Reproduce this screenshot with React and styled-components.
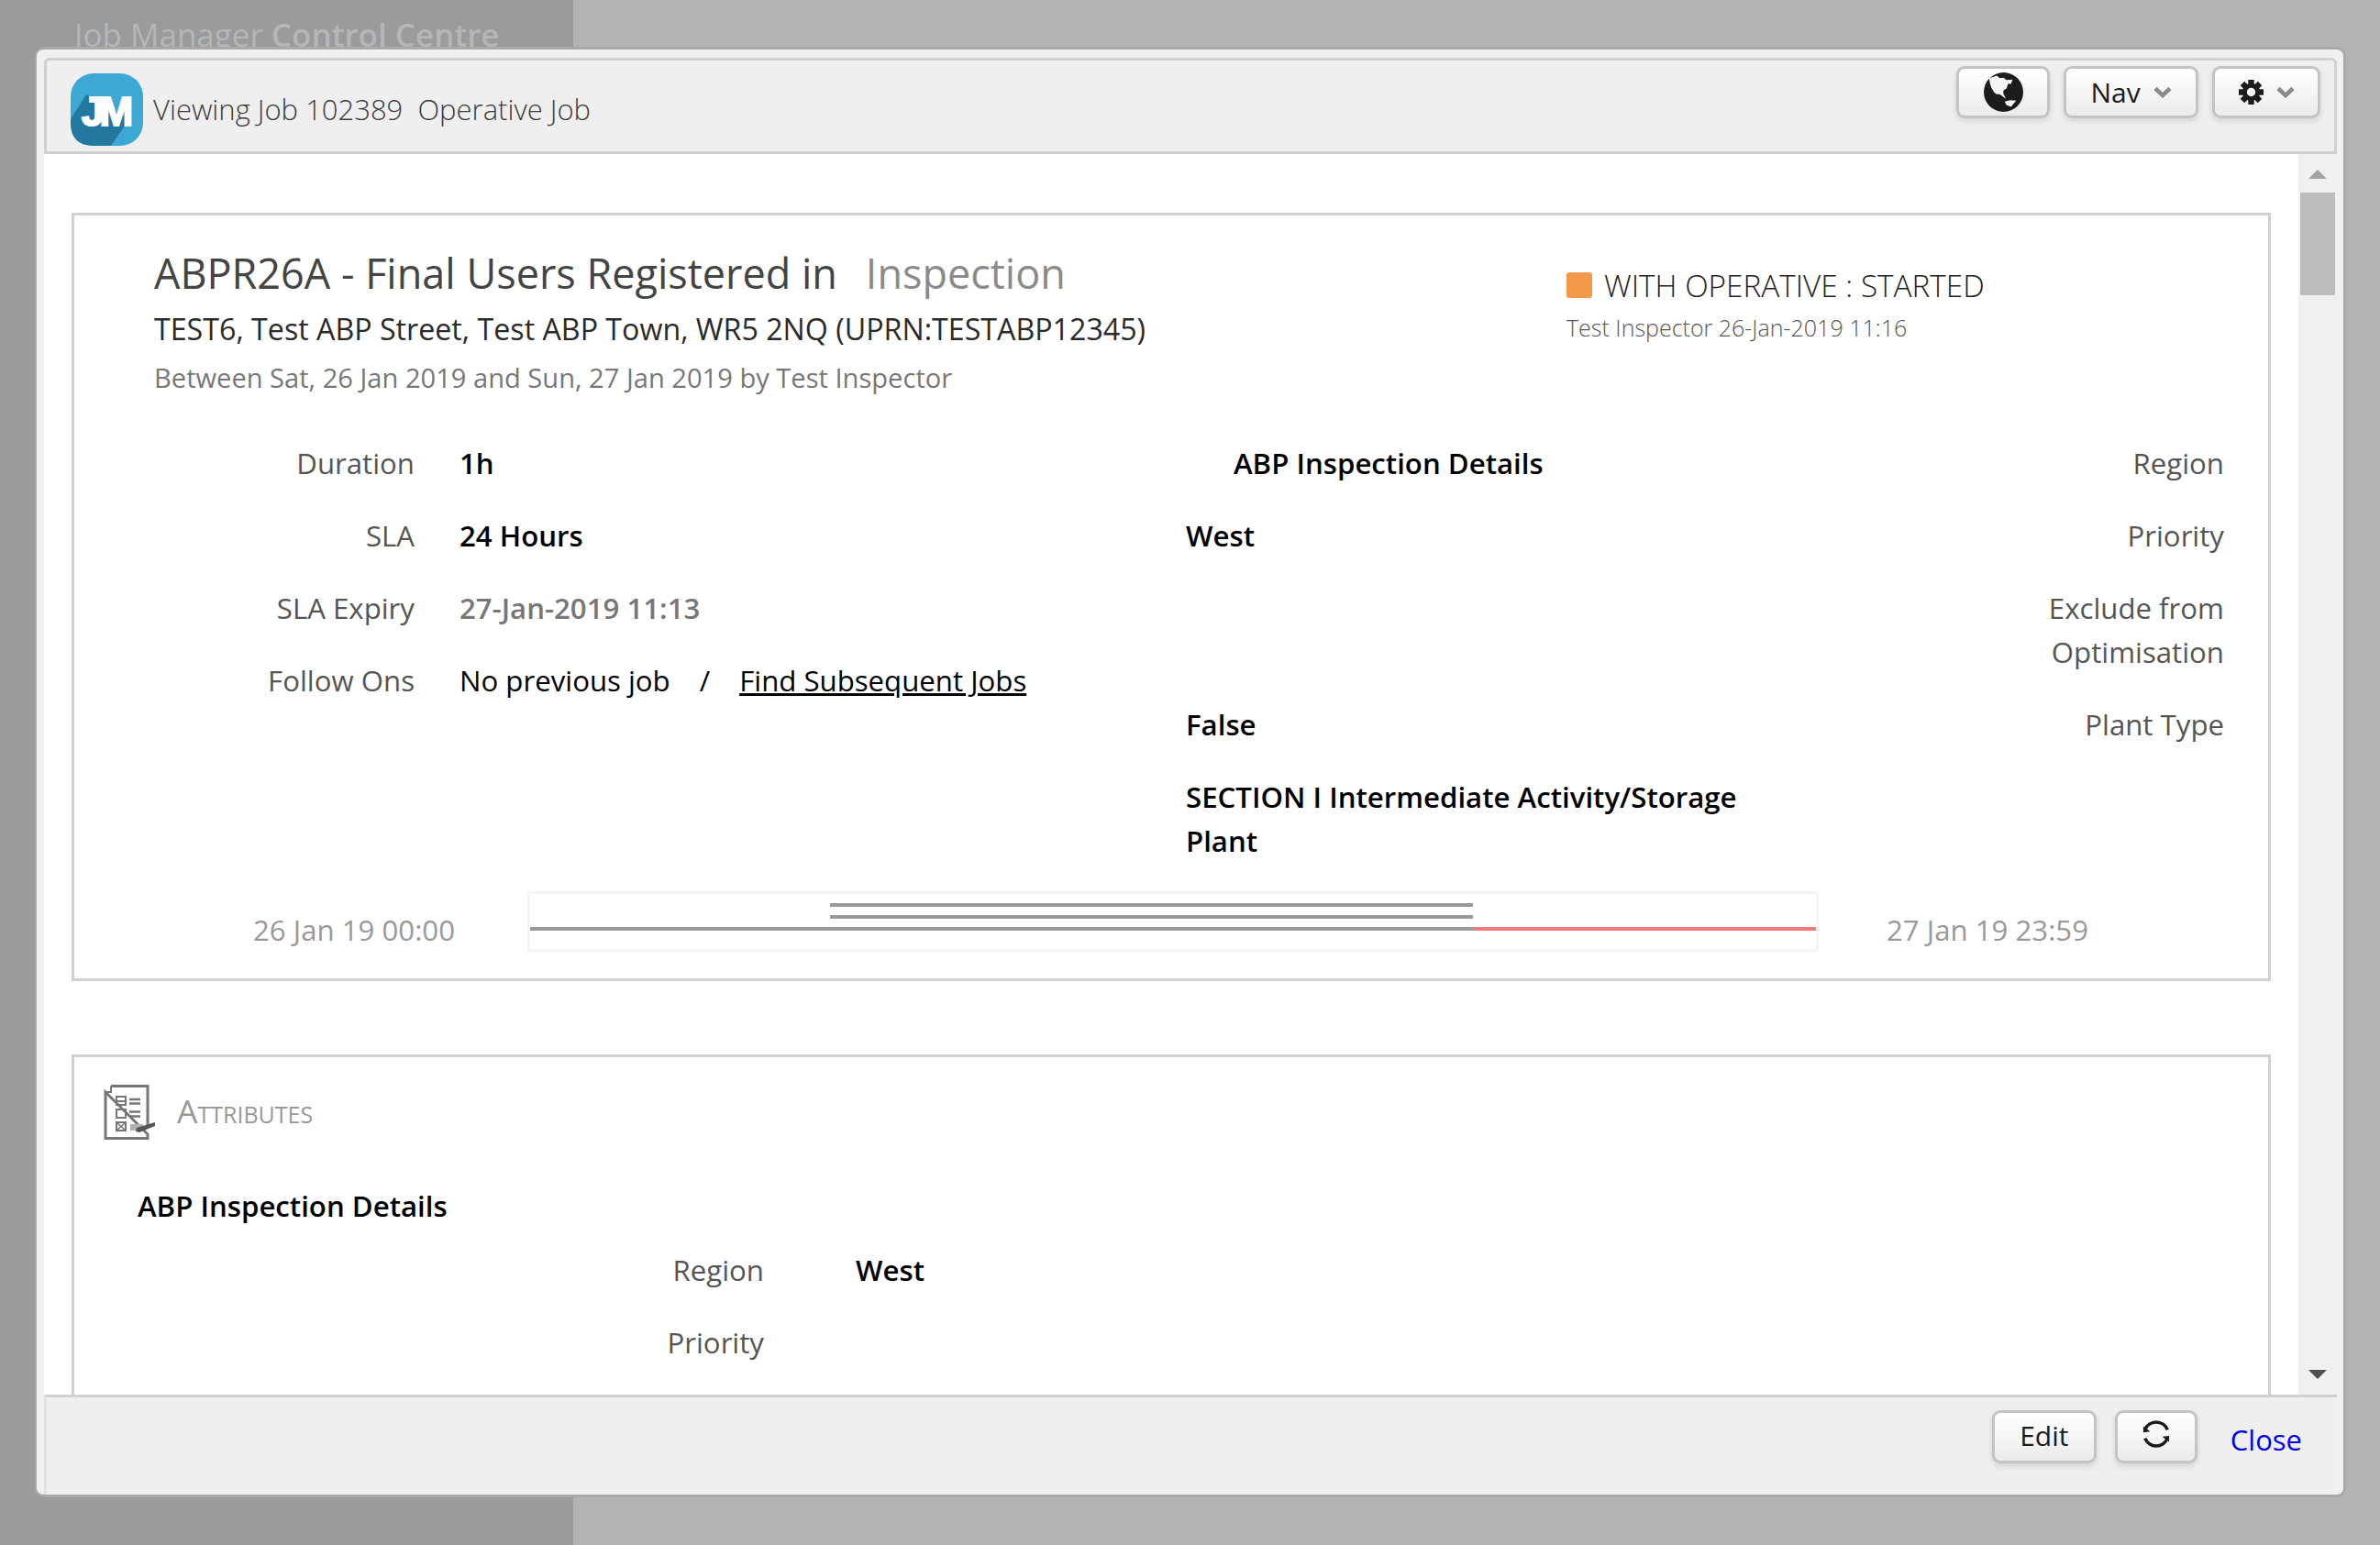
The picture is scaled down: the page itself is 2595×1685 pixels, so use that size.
import React from 'react';
import styled, { createGlobalStyle } from 'styled-components';

const GlobalStyle = createGlobalStyle`
    html, body {
        margin: 0;
        height: 100%;
        overflow: hidden;
        font-family: 'Open Sans', 'Liberation Sans', sans-serif;
    }
    * {
        box-sizing: border-box;
    }
`;

const Page = styled.div`
    height: 1685px;
    background-color: #b3b3b3;
    position: relative;
    overflow: hidden;
`;

const Sidebar = styled.div`
    width: 625px;
    height: 100%;
    background-color: #9a9b9d;
    padding: 13px 0 0 81px;
`;

const AppTitle = styled.div`
    font-size: 35px;
    line-height: 50px;
    font-weight: 400;
    color: #b6b6b6;
    white-space: nowrap;

    b {
        font-weight: 600;
    }
`;

const Dialog = styled.div`
    position: absolute;
    left: 38px;
    top: 51px;
    width: 2520px;
    height: 1582px;
    background-color: #f0f0f0;
    border: 3px solid #a9a9a9;
    border-left-width: 2px;
    border-radius: 10px;
    padding: 9px 7px 0 8px;
    display: flex;
    flex-direction: column;
`;

const DialogHeader = styled.header`
    height: 105px;
    flex: none;
    background-color: #efefef;
    border: 3px solid #d0d0d0;
    border-radius: 6px 6px 0 0;
    padding: 6px 15px 0 26px;
    display: flex;
    justify-content: space-between;
`;

const Brand = styled.div`
    display: flex;
    align-items: flex-start;
    gap: 11px;
    padding-top: 8px;
`;

const LogoBox = styled.div`
    width: 79px;
    height: 80px;
    position: relative;
`;

const LogoText = styled.span`
    position: absolute;
    left: 0;
    right: 4px;
    top: 18px;
    text-align: center;
    font-family: 'Liberation Sans', sans-serif;
    font-size: 44px;
    line-height: 47px;
    font-weight: 700;
    letter-spacing: -5px;
    color: #ffffff;
    -webkit-text-stroke: 2px #ffffff;
`;

const JobTitle = styled.div`
    font-size: 31px;
    line-height: 48px;
    font-weight: 300;
    color: #3c3c3c;
    padding-top: 15px;
    white-space: pre;
`;

const Toolbar = styled.div`
    display: flex;
    gap: 15px;
`;

const Button = styled.button`
    width: ${(p) => p.$width}px;
    height: ${(p) => p.$height || 57}px;
    border: 3px solid #c4c4c4;
    border-radius: 9px;
    background: linear-gradient(#ffffff, #ebebeb);
    box-shadow: 0 3px 6px rgba(0, 0, 0, 0.12);
    color: #1c1c1c;
    font-family: inherit;
    font-size: 30px;
    font-weight: 400;
    padding: 0 0 ${(p) => p.$lift || 0}px;
    display: flex;
    align-items: center;
    justify-content: center;
    gap: ${(p) => p.$gap || 0}px;
`;

const Main = styled.div`
    flex: 1;
    min-height: 0;
    display: flex;
`;

const Content = styled.div`
    flex: 1;
    min-width: 0;
    background-color: #ffffff;
    padding: 64px 30px 0;
    overflow: hidden;
`;

const Scrollbar = styled.div`
    width: 42px;
    flex: none;
    background-color: #f0f0f0;
    display: flex;
    flex-direction: column;
    align-items: center;
    padding: 17px 2px 17px;
`;

const ArrowUp = styled.div`
    width: 0;
    height: 0;
    border-left: 10px solid transparent;
    border-right: 10px solid transparent;
    border-bottom: 10px solid #a3a3a3;
`;

const ArrowDown = styled.div`
    width: 0;
    height: 0;
    border-left: 10px solid transparent;
    border-right: 10px solid transparent;
    border-top: 10px solid #505050;
    margin-top: auto;
`;

const Thumb = styled.div`
    width: 38px;
    height: 112px;
    margin-top: 15px;
    background-color: #bcbcbc;
`;

const Card = styled.section`
    border: 3px solid #d0d0d0;
    height: ${(p) => p.$height}px;
    margin-bottom: 80px;
`;

const JobHead = styled.div`
    display: flex;
    padding: 31px 0 0 87px;
`;

const JobInfo = styled.div`
    width: 1540px;
    flex: none;
`;

const Heading = styled.h1`
    margin: 0;
    font-size: 45px;
    line-height: 64px;
    font-weight: 400;
    color: #444444;
    white-space: pre;

    span {
        margin-left: 31px;
        color: #8a8a8a;
    }
`;

const Address = styled.div`
    margin-top: 5px;
    font-size: 32.2px;
    line-height: 48px;
    color: #2a2a2a;
`;

const Between = styled.div`
    margin-top: 5px;
    font-size: 29.1px;
    line-height: 48px;
    color: #777777;
`;

const Status = styled.div`
    padding-top: 15px;
`;

const StatusLine = styled.div`
    display: flex;
    align-items: center;
    gap: 13px;
    font-size: 33.3px;
    line-height: 60px;
    font-weight: 300;
    color: #222222;
`;

const StatusDot = styled.i`
    width: 28px;
    height: 28px;
    border-radius: 3px;
    background-color: #f5984a;
`;

const StatusBy = styled.div`
    font-size: 25px;
    line-height: 32px;
    font-weight: 300;
    color: #555555;
`;

const Details = styled.div`
    display: flex;
    margin-top: 30px;
`;

const LeftList = styled.div`
    width: 1212px;
    flex: none;
`;

const LeftRow = styled.div`
    display: grid;
    grid-template-columns: 371px 1fr;
    column-gap: 49px;
    padding: 15px 0 16px;
    font-size: 31.2px;
    line-height: 48px;
`;

const Label = styled.div`
    text-align: right;
    color: #555555;
    font-weight: 400;
`;

const Value = styled.div`
    color: ${(p) => (p.$muted ? '#777777' : '#000000')};
    font-weight: ${(p) => (p.$plain ? 400 : 600)};
`;

const Separator = styled.span`
    margin: 0 32px;
`;

const FollowLink = styled.a`
    color: #000000;
    text-decoration: underline;
`;

const RightList = styled.div`
    width: 1132px;
    flex: none;
    display: grid;
    grid-template-columns: 640px 1fr;
    font-size: 31.2px;
    line-height: 48px;
`;

const RightCell = styled.div`
    padding: 15px 0 16px;
`;

const GroupTitle = styled(Value)`
    padding: 15px 0 16px 52px;
`;

const RightLabel = styled(Label)`
    padding: 15px 0 16px 200px;
`;

const TimelineRow = styled.div`
    display: flex;
    align-items: flex-start;
    margin-top: 15px;
    padding-left: 195px;
    font-size: 31.2px;
    line-height: 48px;
    color: #999999;
`;

const TimeLabel = styled.div`
    width: 220px;
    padding-top: 18px;
    white-space: nowrap;
`;

const TimelineBox = styled.div`
    width: 1408px;
    height: 66px;
    margin: 0 74px 0 79px;
    border: 3px solid #f4f4f4;
    display: flex;
    flex-direction: column;
    gap: 9px;
    padding-top: 10px;
`;

const TimeLine = styled.div`
    height: 4px;
    flex: none;
    display: flex;
    margin-left: ${(p) => p.$offset}%;
    width: ${(p) => p.$width}%;
    background-color: #999999;
`;

const Overrun = styled.div`
    height: 4px;
    background-color: #f27a7a;
    margin-left: auto;
`;

const AttrHead = styled.div`
    display: flex;
    align-items: center;
    gap: 22px;
    padding: 30px 0 0 32px;
`;

const AttrTitle = styled.h2`
    margin: -4px 0 0;
    font-size: 35.5px;
    line-height: 48px;
    font-weight: 400;
    font-variant: small-caps;
    color: #999999;
`;

const AttrIconSvg = styled.svg`
    filter: blur(0.5px);
`;

const AttrGroup = styled.div`
    margin: 48px 0 7px 69px;
    font-size: 31.2px;
    line-height: 48px;
    font-weight: 600;
    color: #000000;
`;

const AttrRow = styled.div`
    display: grid;
    grid-template-columns: 752px 1fr;
    column-gap: 100px;
    padding: 15px 0 16px;
    font-size: 31.2px;
    line-height: 48px;
`;

const DialogFooter = styled.footer`
    height: 109px;
    flex: none;
    background-color: #efefef;
    border-top: 3px solid #d0d0d0;
    border-left: 3px solid #e2e2e2;
    display: flex;
    justify-content: flex-end;
    align-items: flex-start;
    gap: 20px;
    padding: 14px 38px 0 0;
`;

const CloseLink = styled.a`
    font-size: 31px;
    line-height: 48px;
    color: #0000ee;
    text-decoration: none;
    margin: 8px 0 0 16px;
`;

const Logo = () => (
    <svg width="79" height="80" viewBox="0 0 79 80">
        <rect x="0" y="0" width="79" height="79" rx="25" fill="#3ea8d4" />
        <path d="M0 50 L17 23 L64 50 L44 79 L25 79 Q0 79 0 54 Z" fill="#23789f" />
    </svg>
);

const Globe = () => (
    <svg width="43" height="43" viewBox="0 0 42 42">
        <circle cx="21" cy="21" r="21" fill="#1c1c1c" />
        <path
            d="M5.7 6 L14 3.5 L17 6 L21 5.5 L24 8 L30.7 7.5 L29 12.3 L26 12 L24 17.3 L21 19 L20.7 22.3 L23.5 28 L17.3 23.5 L13 23 L10.7 20.7 L8 16 L6.7 12.3 Z"
            fill="#f4f4f4"
        />
        <path d="M22.3 31 L28 29.5 L34.5 30 L29 36.7 L24 34.7 Z" fill="#f4f4f4" />
    </svg>
);

const Gear = () => (
    <svg width="27" height="27" viewBox="-13.5 -13.5 27 27">
        {[0, 45, 90, 135, 180, 225, 270, 315].map((angle) => (
            <rect key={angle} x="-3.2" y="-13.5" width="6.4" height="6" transform={`rotate(${angle})`} fill="#1c1c1c" />
        ))}
        <circle r="7.2" fill="none" stroke="#1c1c1c" strokeWidth="5" />
    </svg>
);

const Chevron = () => (
    <svg width="20" height="13" viewBox="0 0 20 13">
        <path d="M2 2.5 L10 10 L18 2.5" fill="none" stroke="#8a8a8a" strokeWidth="4.5" />
    </svg>
);

const AttributesIcon = () => (
    <AttrIconSvg width="58" height="60" viewBox="0 0 58 60" fill="none" stroke="#777">
        <path d="M8 1.5 H48 V44 M48 54 V58.5 H2 V8 Z" strokeWidth="3" />
        <path d="M2 8 H8 V1.5" strokeWidth="2" />
        <rect x="14" y="13" width="10" height="9" strokeWidth="2" />
        <path d="M14 18 H24" strokeWidth="2" />
        <rect x="14" y="27" width="10" height="9" strokeWidth="2" />
        <rect x="14" y="41" width="10" height="9" strokeWidth="2" />
        <path d="M14 41 L24 50 M24 41 L14 50" strokeWidth="1.5" />
        <path d="M28 16 H40 M28 20.5 H40 M28 29.5 H40 M28 34.5 H40" strokeWidth="2.5" />
        <path d="M29 43 H43 V50 H29 Z" fill="#b0b0b0" stroke="none" />
        <path d="M36 47 L56 41 L56 45 L39 52 L35 51 Z" fill="#555" stroke="none" />
    </AttrIconSvg>
);

const RefreshIcon = () => (
    <svg width="30" height="30" viewBox="0 0 32 32" fill="none" stroke="#1c1c1c" strokeWidth="3.8">
        <path d="M3 11 A14 14 0 0 1 29 11" />
        <path d="M29 21 A14 14 0 0 1 3 21" />
        <path d="M1 7 L9 13 L1 14 Z" fill="#1c1c1c" stroke="none" />
        <path d="M31 25 L23 19 L31 18 Z" fill="#1c1c1c" stroke="none" />
    </svg>
);

const App = () => (
    <Page>
        <GlobalStyle />
        <Sidebar>
            <AppTitle>Job Manager <b>Control Centre</b></AppTitle>
        </Sidebar>
        <Dialog>
            <DialogHeader>
                <Brand>
                    <LogoBox>
                        <Logo />
                        <LogoText>JM</LogoText>
                    </LogoBox>
                    <JobTitle>Viewing Job 102389  Operative Job</JobTitle>
                </Brand>
                <Toolbar>
                    <Button $width={102}><Globe /></Button>
                    <Button $width={147} $gap={14}>Nav <Chevron /></Button>
                    <Button $width={118} $gap={14}><Gear /><Chevron /></Button>
                </Toolbar>
            </DialogHeader>
            <Main>
                <Content>
                    <Card $height={838}>
                        <JobHead>
                            <JobInfo>
                                <Heading>ABPR26A - Final Users Registered in<span>Inspection</span></Heading>
                                <Address>TEST6, Test ABP Street, Test ABP Town, WR5 2NQ (UPRN:TESTABP12345)</Address>
                                <Between>Between Sat, 26 Jan 2019 and Sun, 27 Jan 2019 by Test Inspector</Between>
                            </JobInfo>
                            <Status>
                                <StatusLine><StatusDot />WITH OPERATIVE : STARTED</StatusLine>
                                <StatusBy>Test Inspector 26-Jan-2019 11:16</StatusBy>
                            </Status>
                        </JobHead>
                        <Details>
                            <LeftList>
                                <LeftRow><Label>Duration</Label><Value>1h</Value></LeftRow>
                                <LeftRow><Label>SLA</Label><Value>24 Hours</Value></LeftRow>
                                <LeftRow><Label>SLA Expiry</Label><Value $muted>27-Jan-2019 11:13</Value></LeftRow>
                                <LeftRow>
                                    <Label>Follow Ons</Label>
                                    <Value $plain>
                                        No previous job<Separator>/</Separator>
                                        <FollowLink href="#subsequent">Find Subsequent Jobs</FollowLink>
                                    </Value>
                                </LeftRow>
                            </LeftList>
                            <RightList>
                                <GroupTitle>ABP Inspection Details</GroupTitle>
                                <RightLabel>Region</RightLabel>
                                <RightCell><Value>West</Value></RightCell>
                                <RightLabel>Priority</RightLabel>
                                <RightCell />
                                <RightLabel>Exclude from Optimisation</RightLabel>
                                <RightCell><Value>False</Value></RightCell>
                                <RightLabel>Plant Type</RightLabel>
                                <RightCell><Value>SECTION I Intermediate Activity/Storage Plant</Value></RightCell>
                                <RightCell />
                            </RightList>
                        </Details>
                        <TimelineRow>
                            <TimeLabel>26 Jan 19 00:00</TimeLabel>
                            <TimelineBox>
                                <TimeLine $offset={23.3} $width={50} />
                                <TimeLine $offset={23.3} $width={50} />
                                <TimeLine $offset={0} $width={100}>
                                    <Overrun style={{ width: '26.6%' }} />
                                </TimeLine>
                            </TimelineBox>
                            <TimeLabel>27 Jan 19 23:59</TimeLabel>
                        </TimelineRow>
                    </Card>
                    <Card $height={600}>
                        <AttrHead>
                            <AttributesIcon />
                            <AttrTitle>Attributes</AttrTitle>
                        </AttrHead>
                        <AttrGroup>ABP Inspection Details</AttrGroup>
                        <AttrRow><Label>Region</Label><Value>West</Value></AttrRow>
                        <AttrRow><Label>Priority</Label><Value /></AttrRow>
                    </Card>
                </Content>
                <Scrollbar>
                    <ArrowUp />
                    <Thumb />
                    <ArrowDown />
                </Scrollbar>
            </Main>
            <DialogFooter>
                <Button $width={114} $height={58} $lift={3}>Edit</Button>
                <Button $width={90} $height={58} $lift={7}><RefreshIcon /></Button>
                <CloseLink href="#close">Close</CloseLink>
            </DialogFooter>
        </Dialog>
    </Page>
);

export default App;
